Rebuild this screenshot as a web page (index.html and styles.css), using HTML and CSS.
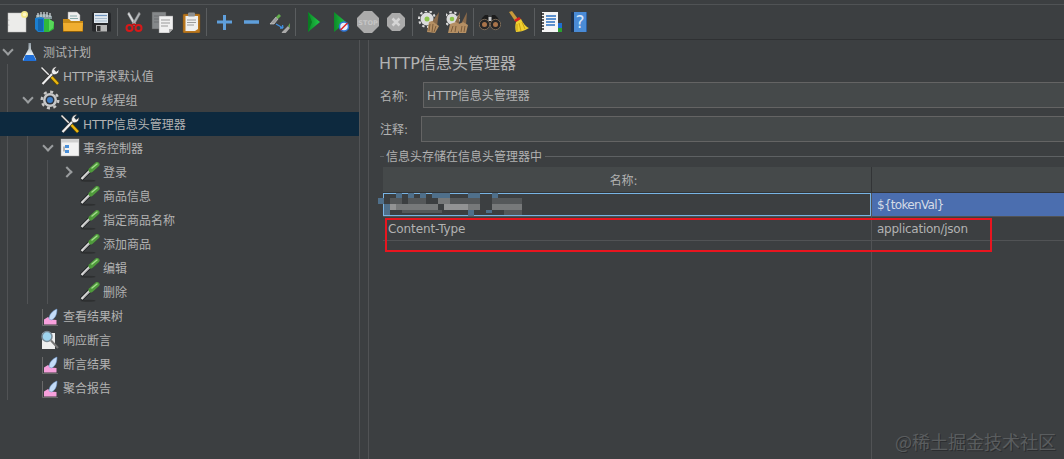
FILE: index.html
```html
<!DOCTYPE html>
<html lang="zh">
<head>
    <meta charset="UTF-8">
    <title>JMeter - HTTP信息头管理器</title>
    <link rel="stylesheet" href="styles.css">
</head>
<body>
    <!-- shared tree icons -->
    <svg class="defs" width="0" height="0">
        <defs>
            <linearGradient id="green" x1="0" y1="0" x2="1" y2="0">
                <stop offset="0" stop-color="#0c8a28"/><stop offset="1" stop-color="#22c848"/>
            </linearGradient>
            <linearGradient id="glass" x1="0" y1="0" x2="0" y2="1">
                <stop offset="0" stop-color="#8d99a2"/><stop offset=".6" stop-color="#e4ecf0"/><stop offset="1" stop-color="#e4ecf0"/>
            </linearGradient>
            <symbol id="dropper" viewBox="0 0 20 20">
                <ellipse cx="8" cy="18.800" rx="7.500" ry="1" fill="#2e3031"/>
                <path d="M1 17.500L10 8.500" stroke="#26282a" stroke-width="4.200"/>
                <path d="M1.500 17L10 8.500" stroke="#dcdcdc" stroke-width="2.400"/>
                <path d="M4 15.500l6-6" stroke="#8a8a8a" stroke-width=".8"/>
                <path d="M11 8l6-5.500" stroke="#4f9a3c" stroke-width="5" stroke-linecap="round"/>
                <path d="M12 6l5-4" stroke="#a3dc8c" stroke-width="1.500" stroke-linecap="round"/>
            </symbol>
            <symbol id="tools" viewBox="0 0 20 20">
                <path d="M1.500 1.500L11 11" stroke="#333" stroke-width="2.600"/>
                <path d="M1.500 1.500L11 11" stroke="#e8e8e8" stroke-width="1.400"/>
                <path d="M2.500 18L13 7" stroke="#333" stroke-width="3.600"/>
                <path d="M2.500 18L13 7" stroke="#efefef" stroke-width="2.200"/>
                <path d="M12 8c-1.500-3 .5-7.500 5-7.500l-2.500 3 1.500 2 3-2c.5 4-3.500 6.500-7 4.500z" fill="#efefef" stroke="#333" stroke-width=".7"/>
                <path d="M11.500 11l6.500 7" stroke="#5e4800" stroke-width="3.600"/>
                <path d="M11.500 11l6.500 7" stroke="#eab70f" stroke-width="2.400"/>
            </symbol>
            <symbol id="chart" viewBox="0 0 16 18">
                <path d="M.5 1v16.500H16" fill="none" stroke="#6a6a6a" stroke-width="1"/>
                <path d="M2 16.500V11.500l4-2.500 3 2.500 5.500.5v4.500z" fill="#f7a0dc"/>
                <path d="M7 11c0-4 3-8 8-10 0 5-1.500 9-5.500 11z" fill="#c4dcf8" stroke="#6d96d0" stroke-width=".5"/>
            </symbol>
        </defs>
    </svg>

    <div class="menu-strip"></div>

    <div class="toolbar">
        <span class="tool"><svg viewBox="0 0 22 22"><rect x="2" y="2" width="18" height="19" fill="#ececea" stroke="#bbb" stroke-width=".5"/><circle cx="2.800" cy="9" r=".5" fill="#999"/><circle cx="2.800" cy="14" r=".5" fill="#999"/><circle cx="18.500" cy="3.500" r="3.500" fill="#f3e98a"/><circle cx="18.500" cy="3.500" r="1.800" fill="#fff8c8"/></svg></span>
        <span class="tool"><svg viewBox="0 0 22 22"><path d="M2 4l9-1 7 2v3H2z" fill="#8a9a9e"/><path d="M4 2v4M7 1v5M10 1v5M13 1v5M16 2v4" stroke="#d5dde0" stroke-width="1.200"/><path d="M1 7l6-1 3 1 1 14-7 0-3-3z" fill="#1b7fd0"/><path d="M4 8h5v12H4z" fill="#1466ad"/><path d="M10 8h5l5 3 0 7-5 3h-5z" fill="#2fb83a"/><path d="M15 8l5 3-1 6-4 3z" fill="#58d85a"/></svg></span>
        <span class="tool"><svg viewBox="0 0 22 22"><path d="M6 1h9l3 3v8H6z" fill="#eee" stroke="#999" stroke-width=".5"/><path d="M8 5h7M8 7.500h8" stroke="#8aa" stroke-width="1"/><path d="M1 8h6l2 2h12v10H1z" fill="#c98b17"/><path d="M1 12h20l-1 8.500H2z" fill="#f0ae30"/><path d="M1 20.500h20" stroke="#8e5e09" stroke-width="1"/></svg></span>
        <span class="tool"><svg viewBox="0 0 22 22"><path d="M2 1.500h18l1 1v18H3l-1-1z" fill="#26282b"/><rect x="4" y="2" width="14" height="10" fill="#dfe7ee"/><path d="M5 4.500h12" stroke="#6f95c0" stroke-width="1.200"/><path d="M5 7.500h12M5 10h12" stroke="#a9bccd" stroke-width="1"/><rect x="6" y="14" width="11" height="6.500" fill="#b7b7b7"/><rect x="7" y="15" width="3.500" height="5" fill="#333"/></svg></span>
        <span class="tool-sep"></span>
        <span class="tool"><svg viewBox="0 0 22 22"><path d="M6 1l7 12-2 1.500L4.500 3z" fill="#d5d8da" stroke="#888" stroke-width=".4"/><path d="M16 1l-7 12 2 1.500L17.500 3z" fill="#aeb2b5" stroke="#777" stroke-width=".4"/><circle cx="6.500" cy="17" r="3" fill="none" stroke="#d81818" stroke-width="2"/><circle cx="15.500" cy="17" r="3" fill="none" stroke="#d81818" stroke-width="2"/><path d="M9 14l2-1 2 1" stroke="#c01010" stroke-width="1.500" fill="none"/></svg></span>
        <span class="tool"><svg viewBox="0 0 22 22"><rect x="1" y="1" width="14" height="17" fill="#85888a" stroke="#555" stroke-width=".5"/><path d="M3 5h10M3 8h10M3 11h10" stroke="#6c6f71"/><path d="M8 5h14v13l-4 4H8z" fill="#f0f0f0" stroke="#888" stroke-width=".5"/><path d="M10 9h9M10 12h9M10 15h7" stroke="#9a9a9a"/><path d="M18 22v-4h4z" fill="#aaa"/></svg></span>
        <span class="tool"><svg viewBox="0 0 22 22"><rect x="4" y="3" width="17" height="19" rx="1" fill="#b9771f" stroke="#7a4c10" stroke-width=".5"/><path d="M6.500 5h12.500v13l-3 2H6.500z" fill="#efefef"/><path d="M8 9h9M8 11.500h9M8 14h7" stroke="#9b9b9b"/><rect x="9" y="1.500" width="7" height="4" rx="1" fill="#8d8f90"/></svg></span>
        <span class="tool-sep"></span>
        <span class="tool"><svg viewBox="0 0 22 22"><path d="M5 11h15M12.500 4v15" stroke="#5f9fdb" stroke-width="3"/></svg></span>
        <span class="tool"><svg viewBox="0 0 22 22"><path d="M4 11h15" stroke="#5f9fdb" stroke-width="3.500"/></svg></span>
        <span class="tool"><svg viewBox="0 0 22 22"><path d="M2 13l6-7 2 2-4 5z" fill="#9a9a9a" stroke="#eee" stroke-width=".5"/><path d="M8 6l3-3 2 2-3 3z" fill="#63b04c"/><path d="M8 13l7 4M15 17l-.500-3M15 17l-3 0" stroke="#3f8fe0" stroke-width="1.300" fill="none"/><path d="M13 24l1-3 6-6 2 2-6 7z" fill="#aaa"/><path d="M20 15l2-3 1 3-1 2z" fill="#63a04c"/></svg></span>
        <span class="tool-sep"></span>
        <span class="tool"><svg viewBox="0 0 22 22"><path d="M7 1l12 10L7 21z" fill="url(#green)"/><path d="M7 1v20l4-10z" fill="#0a7a22"/></svg></span>
        <span class="tool"><svg viewBox="0 0 22 22"><path d="M5 1l12 10L5 21z" fill="url(#green)"/><circle cx="15" cy="15.500" r="4.500" fill="#e8eef8" stroke="#2d76d8" stroke-width="1.500"/><path d="M11.500 19l7-7" stroke="#e02020" stroke-width="1.500"/></svg></span>
        <span class="tool"><svg viewBox="0 0 22 22"><path d="M7 0h8l7 7v8l-7 7H7l-7-7V7z" fill="#ababab"/><text x="11" y="13.500" text-anchor="middle" class="stop-text">STOP</text></svg></span>
        <span class="tool"><svg viewBox="0 0 22 22"><path d="M7 2h8l5 5v8l-5 5H7l-5-5V7z" fill="#ababab"/><path d="M7.500 7.500l7 7M14.500 7.500l-7 7" stroke="#d5d5d5" stroke-width="2.500"/></svg></span>
        <span class="tool-sep"></span>
        <span class="tool"><svg viewBox="0 0 22 22"><circle cx="9" cy="8" r="6.500" fill="#dcdcdc"/><circle cx="9" cy="8" r="8" fill="none" stroke="#dcdcdc" stroke-width="2" stroke-dasharray="2.500 2.500"/><circle cx="9" cy="8" r="2.500" fill="#8bc34a"/><path d="M21 1l-7 10 5 4z" fill="#8a6a4a"/><path d="M11 11l3-1 7 5-4 7-8-1z" fill="#b58f63"/><path d="M12 13l-1 7M15 13l-1 8M18 15l-2 6" stroke="#7c5c3a"/></svg></span>
        <span class="tool"><svg viewBox="0 0 22 22"><circle cx="6" cy="8" r="5.500" fill="#dcdcdc"/><circle cx="6" cy="8" r="7" fill="none" stroke="#dcdcdc" stroke-width="2" stroke-dasharray="2.500 2.500"/><circle cx="6" cy="8" r="2.300" fill="#8bc34a"/><path d="M14 1L9 11l4 3zM21 1l-5 10 4 3z" fill="#8a6a4a"/><path d="M4 13l6-2 5 3-3 8H2zM13 13l4-2 5 3-2 8h-7z" fill="#b58f63"/><path d="M7 15l-2 6M10 15l-1 6M16 15l-1 6M19 15l-1 6" stroke="#7c5c3a"/></svg></span>
        <span class="tool-sep"></span>
        <span class="tool"><svg viewBox="0 0 22 22"><path d="M3 7l3-3h3l1 4h2l1-4h3l3 3 2 6H1z" fill="#1c1c1c"/><circle cx="5.500" cy="13.500" r="5.200" fill="#262626" stroke="#8a7660" stroke-width=".8"/><circle cx="16.500" cy="13.500" r="5.200" fill="#262626" stroke="#8a7660" stroke-width=".8"/><circle cx="5.500" cy="13.500" r="2.500" fill="#a9744a"/><circle cx="16.500" cy="13.500" r="2.500" fill="#a9744a"/><rect x="9.500" y="6" width="3" height="4" fill="#c9c9c9"/></svg></span>
        <span class="tool"><svg viewBox="0 0 22 22"><path d="M2 1l3-1 6 8-3 2z" fill="#c89a3a"/><path d="M7 9l5-3 2 2-5 3z" fill="#d82020"/><path d="M9 11l5-3c2 4 5 8 8 9-5 3-10 4-13 4-1-3-1-7 0-10z" fill="#f0d030"/><path d="M12 12l2 8M15 11l3 7M10 13v7" stroke="#c8a010"/></svg></span>
        <span class="tool-sep"></span>
        <span class="tool"><svg viewBox="0 0 22 22"><rect x="2" y="1" width="16" height="20" fill="#f5f5f5"/><path d="M1 3h3M1 6h3M1 9h3M1 12h3M1 15h3M1 18h3" stroke="#222" stroke-width="1.300"/><path d="M6 5h10M6 8h10M6 11h9M6 14h9" stroke="#2a6fc0" stroke-width="1.400"/><rect x="18" y="12" width="4" height="5" fill="#1f6fd0"/><rect x="18" y="17" width="4" height="4" fill="#2aa030"/></svg></span>
        <span class="tool"><svg viewBox="0 0 22 22"><path d="M3 1h15v20H3z" fill="#4a8bd6"/><path d="M3 1h3v20H3z" fill="#1f3048"/><path d="M18 1h1v20h-1z" fill="#2c5e9e"/><text x="12" y="17" text-anchor="middle" class="help-text">?</text></svg></span>
    </div>

    <div class="main">
        <div class="tree-panel">
            <div class="tree-row">
                <span class="arrow down"></span>
                <span class="node-icon"><svg viewBox="0 0 20 20"><path d="M8.500 1h2.500v6l5 10c.500 1-.500 2-1 2H4c-1 0-1.500-1-1-2l5.500-10z" fill="url(#glass)"/><path d="M5.500 13h8l3 6H3z" fill="#1f6fd8"/></svg></span>
                <span class="node-label">测试计划</span>
            </div>
            <div class="tree-row">
                <span class="guide"></span><span class="arrow"></span>
                <span class="node-icon"><svg viewBox="0 0 20 20"><use href="#tools"/></svg></span>
                <span class="node-label">HTTP请求默认值</span>
            </div>
            <div class="tree-row">
                <span class="guide"></span><span class="arrow down"></span>
                <span class="node-icon"><svg viewBox="0 0 20 20"><circle cx="10" cy="10" r="7" fill="#c8c8c8"/><circle cx="10" cy="10" r="8.300" fill="none" stroke="#c8c8c8" stroke-width="2.400" stroke-dasharray="3 3.500"/><circle cx="10" cy="10" r="4.500" fill="#2c3440"/><circle cx="10" cy="10" r="3" fill="#3f7fc8"/></svg></span>
                <span class="node-label">setUp 线程组</span>
            </div>
            <div class="tree-row selected">
                <span class="guide"></span><span class="guide"></span><span class="arrow"></span>
                <span class="node-icon"><svg viewBox="0 0 20 20"><use href="#tools"/></svg></span>
                <span class="node-label">HTTP信息头管理器</span>
            </div>
            <div class="tree-row">
                <span class="guide"></span><span class="guide"></span><span class="arrow down"></span>
                <span class="node-icon"><svg viewBox="0 0 20 20"><rect x="1" y="1" width="18" height="17" fill="#f2f2f2" stroke="#999" stroke-width=".5"/><rect x="1" y="1" width="18" height="3.500" fill="#cfcfcf"/><rect x="5" y="7" width="4" height="3" fill="#4a90d9"/><rect x="5" y="12" width="4" height="3" fill="#4a90d9"/><path d="M4 8.500v5" stroke="#777"/></svg></span>
                <span class="node-label">事务控制器</span>
            </div>
            <div class="tree-row">
                <span class="guide"></span><span class="guide"></span><span class="guide"></span><span class="arrow right"></span>
                <span class="node-icon"><svg viewBox="0 0 20 20"><use href="#dropper"/></svg></span>
                <span class="node-label">登录</span>
            </div>
            <div class="tree-row">
                <span class="guide"></span><span class="guide"></span><span class="guide"></span><span class="arrow"></span>
                <span class="node-icon"><svg viewBox="0 0 20 20"><use href="#dropper"/></svg></span>
                <span class="node-label">商品信息</span>
            </div>
            <div class="tree-row">
                <span class="guide"></span><span class="guide"></span><span class="guide"></span><span class="arrow"></span>
                <span class="node-icon"><svg viewBox="0 0 20 20"><use href="#dropper"/></svg></span>
                <span class="node-label">指定商品名称</span>
            </div>
            <div class="tree-row">
                <span class="guide"></span><span class="guide"></span><span class="guide"></span><span class="arrow"></span>
                <span class="node-icon"><svg viewBox="0 0 20 20"><use href="#dropper"/></svg></span>
                <span class="node-label">添加商品</span>
            </div>
            <div class="tree-row">
                <span class="guide"></span><span class="guide"></span><span class="guide"></span><span class="arrow"></span>
                <span class="node-icon"><svg viewBox="0 0 20 20"><use href="#dropper"/></svg></span>
                <span class="node-label">编辑</span>
            </div>
            <div class="tree-row">
                <span class="guide"></span><span class="guide"></span><span class="guide"></span><span class="arrow"></span>
                <span class="node-icon"><svg viewBox="0 0 20 20"><use href="#dropper"/></svg></span>
                <span class="node-label">删除</span>
            </div>
            <div class="tree-row">
                <span class="guide"></span><span class="arrow"></span>
                <span class="node-icon"><svg class="chart-icon" viewBox="0 0 16 18"><use href="#chart"/></svg></span>
                <span class="node-label">查看结果树</span>
            </div>
            <div class="tree-row">
                <span class="guide"></span><span class="arrow"></span>
                <span class="node-icon"><svg viewBox="0 0 20 20"><rect x="2" y="3" width="13" height="16" fill="#eee"/><circle cx="7" cy="6.500" r="5" fill="#9fd4ee" stroke="#7a8a96" stroke-width="1.500"/><path d="M11 10.500l7 7.500" stroke="#777" stroke-width="2"/></svg></span>
                <span class="node-label">响应断言</span>
            </div>
            <div class="tree-row">
                <span class="guide"></span><span class="arrow"></span>
                <span class="node-icon"><svg class="chart-icon" viewBox="0 0 16 18"><use href="#chart"/></svg></span>
                <span class="node-label">断言结果</span>
            </div>
            <div class="tree-row">
                <span class="guide"></span><span class="arrow"></span>
                <span class="node-icon"><svg class="chart-icon" viewBox="0 0 16 18"><use href="#chart"/></svg></span>
                <span class="node-label">聚合报告</span>
            </div>
        </div>

        <div class="content-panel">
            <h1 class="page-title">HTTP信息头管理器</h1>
            <div class="form-row name-row">
                <label class="form-label">名称:</label>
                <div class="form-input">HTTP信息头管理器</div>
            </div>
            <div class="form-row comment-row">
                <label class="form-label">注释:</label>
                <div class="form-input"></div>
            </div>

            <div class="group-title"><span>信息头存储在信息头管理器中</span></div>

            <div class="table">
                <div class="table-row table-head">
                    <div class="col-name">名称:</div>
                    <div class="col-value"></div>
                </div>
                <div class="table-row row-edit">
                    <div class="col-name"><div class="cell-editor"></div></div>
                    <div class="col-value cell-selected">${tokenVal}</div>
                </div>
                <div class="table-row">
                    <div class="col-name">Content-Type</div>
                    <div class="col-value">application/json</div>
                </div>
                <div class="table-fill">
                    <div class="col-name"></div>
                    <div class="col-value"></div>
                </div>
            </div>
        </div>
    </div>

    <!-- pixelated name over the first table row -->
    <svg class="mosaic" width="148" height="32" viewBox="0 0 148 32">
        <g fill="#4f6f8a">
            <rect x="18" y="5" width="6" height="5"/><rect x="30" y="5" width="6" height="5"/><rect x="42" y="5" width="6" height="5"/>
            <rect x="54" y="5" width="18" height="5"/><rect x="90" y="5" width="12" height="5"/><rect x="114" y="5" width="6" height="5"/>
            <rect x="0" y="10" width="6" height="6"/><rect x="6" y="16" width="6" height="6"/><rect x="6" y="22" width="6" height="5"/>
            <rect x="24" y="22" width="6" height="3"/><rect x="90" y="22" width="6" height="6"/><rect x="108" y="22" width="6" height="3"/>
        </g>
        <g fill="#55585a">
            <rect x="12" y="10" width="12" height="6"/><rect x="30" y="10" width="18" height="6"/><rect x="60" y="10" width="42" height="6"/>
            <rect x="114" y="10" width="30" height="6"/><rect x="24" y="22" width="40" height="3"/><rect x="126" y="22" width="18" height="5"/>
        </g>
        <g fill="#77797a">
            <rect x="12" y="16" width="12" height="6"/><rect x="24" y="16" width="36" height="6"/><rect x="78" y="16" width="24" height="6"/>
            <rect x="60" y="10" width="12" height="6"/><rect x="114" y="16" width="30" height="6"/>
        </g>
        <g fill="#929394">
            <rect x="12" y="16" width="6" height="6"/><rect x="66" y="16" width="18" height="6"/><rect x="84" y="16" width="6" height="6"/>
        </g>
    </svg>

    <div class="red-box"></div>
    <div class="watermark">@稀土掘金技术社区</div>
</body>
</html>
```

FILE: styles.css
```css
* {
    margin: 0;
    padding: 0;
    box-sizing: border-box;
}

body {
    width: 1064px;
    height: 459px;
    overflow: hidden;
    display: flex;
    flex-direction: column;
    background-color: #3c3f41;
    color: #b2b2b2;
    font-family: "DejaVu Sans", "Noto Sans CJK SC", sans-serif;
    font-size: 12px;
}

.defs {
    display: block;
    height: 0;
}

.menu-strip {
    height: 5px;
    flex: none;
    border-bottom: 1px solid #505355;
}

.toolbar {
    height: 35px;
    flex: none;
    display: flex;
    align-items: center;
    padding-left: 3px;
    border-bottom: 1px solid #2f3133;
}

.tool {
    width: 28px;
    height: 22px;
    display: flex;
    justify-content: center;
}

.tool svg {
    width: 22px;
    height: 22px;
}

.tool-sep {
    width: 5px;
    height: 28px;
    display: flex;
    justify-content: center;
}

.tool-sep::before {
    content: "";
    width: 1px;
    background-color: #5a5d5f;
}

.stop-text {
    font-size: 6.500px;
    font-weight: 700;
    fill: #c6c6c6;
}

.help-text {
    font-size: 17px;
    fill: #d8e6f8;
}

.main {
    flex: 1;
    display: flex;
    min-height: 0;
}

/* left tree */
.tree-panel {
    width: 360px;
    flex: none;
    border-right: 1px solid #515355;
}

.tree-row {
    height: 24px;
    display: flex;
    align-items: center;
}

.tree-row.selected {
    background-color: #0d293e;
}

.tree-row.selected .guide::before {
    display: none;
}

.guide {
    width: 20px;
    height: 24px;
    flex: none;
    display: flex;
    padding-left: 7px;
}

.guide::before {
    content: "";
    width: 1px;
    background-color: #515355;
}

.arrow {
    width: 20px;
    height: 24px;
    flex: none;
    display: flex;
    align-items: center;
    padding-left: 4px;
}

.arrow.down::before,
.arrow.right::before {
    content: "";
    width: 6px;
    height: 6px;
    border-right: 2px solid #9a9d9f;
    border-bottom: 2px solid #9a9d9f;
}

.arrow.down::before {
    transform: translate(0, -2px) rotate(45deg);
}

.arrow.right::before {
    transform: translate(-1px, 0) rotate(-45deg);
}

.node-icon {
    width: 20px;
    height: 20px;
    flex: none;
    display: flex;
    align-items: center;
    justify-content: center;
}

.node-icon svg {
    width: 20px;
    height: 20px;
}

.node-icon svg.chart-icon {
    width: 16px;
    height: 18px;
    margin-top: 2px;
}

.node-label {
    margin-left: 3px;
    padding-bottom: 2px;
    white-space: nowrap;
}

/* right side */
.content-panel {
    flex: 1;
    min-width: 0;
    margin-left: 8px;
    border-left: 1px solid #515355;
    padding: 13px 0 0 11px;
    display: flex;
    flex-direction: column;
    overflow: hidden;
}

.page-title {
    font-size: 16px;
    font-weight: 400;
    line-height: 20px;
    margin: 1px 0 8px -1px;
}

.form-row {
    display: flex;
    align-items: center;
    height: 26px;
}

.comment-row {
    margin-top: 8px;
}

.form-label {
    width: 41px;
    flex: none;
}

.comment-row .form-label {
    padding-bottom: 2px;
}

.name-row .form-label {
    width: 43px;
}

.form-input {
    flex: 1;
    height: 26px;
    margin-right: -4px;
    padding-left: 3px;
    line-height: 26px;
    background-color: #45494a;
    border: 1px solid #646464;
}

.group-title {
    height: 14px;
    margin-top: 7px;
    display: flex;
    align-items: center;
}

.group-title::before {
    content: "";
    width: 4px;
    height: 1px;
    background-color: #5e6163;
}

.group-title::after {
    content: "";
    flex: 1;
    height: 1px;
    background-color: #5e6163;
}

.group-title span {
    padding: 0 3px 2px 2px;
}

.table {
    flex: 1;
    margin: 4px 0 0 3px;
    display: flex;
    flex-direction: column;
}

.table-row {
    display: flex;
    height: 24px;
    border-bottom: 1px solid #515355;
}

.table-head {
    height: 26px;
    border-bottom-color: #323436;
    background-color: #45494a;
}

.table-head .col-name {
    justify-content: center;
    padding: 0 7px 0 0;
    border-right-color: #323436;
}

.table-fill {
    flex: 1;
    display: flex;
}

.col-name {
    width: 489px;
    flex: none;
    display: flex;
    align-items: center;
    padding-left: 5px;
    letter-spacing: -0.1px;
    border-right: 1px solid #515355;
}

.col-value {
    flex: 1;
    display: flex;
    align-items: center;
    padding-left: 5px;
    letter-spacing: -0.25px;
}

.row-edit .col-name {
    padding: 0;
}

.cell-editor {
    width: 100%;
    height: 23px;
    border: 1px solid #78b4e4;
    background-color: #3c3f41;
}

.col-value.cell-selected {
    background-color: #4b6eaf;
    color: #d4dbe6;
    letter-spacing: -0.7px;
}

/* things drawn over the screenshot */
.mosaic {
    position: absolute;
    left: 378px;
    top: 188px;
}

.red-box {
    position: absolute;
    left: 385px;
    top: 218px;
    width: 607px;
    height: 34px;
    border: 2px solid #e8151f;
}

.watermark {
    position: absolute;
    right: 8px;
    top: 430px;
    font-family: "Noto Sans CJK SC", sans-serif;
    font-size: 18px;
    line-height: 22px;
    color: #5a5d5f;
    text-shadow: 1px 1px 0 #2c2e30;
    white-space: nowrap;
}
```
